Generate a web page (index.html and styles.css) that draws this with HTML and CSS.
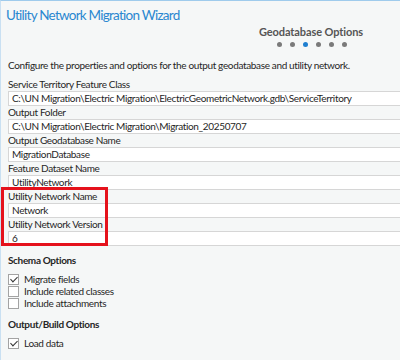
FILE: index.html
```html
<!DOCTYPE html>
<html lang="en">
<head>
  <meta charset="UTF-8">
  <title>Utility Network Migration Wizard</title>
  <link rel="stylesheet" href="styles.css">
</head>
<body>
  <div class="wizard">
    <div class="title">Utility Network Migration Wizard</div>
    <div class="step">
      <div class="step-name">Geodatabase Options</div>
      <div class="dots">
        <span class="dot"></span>
        <span class="dot"></span>
        <span class="dot active"></span>
        <span class="dot"></span>
        <span class="dot"></span>
        <span class="dot"></span>
      </div>
    </div>
    <div class="intro">Configure the properties and options for the output geodatabase and utility network.</div>

    <div class="fields">
      <div class="field">
        <div class="label">Service Territory Feature Class</div>
        <div class="input">C:\UN Migration\Electric Migration\ElectricGeometricNetwork.gdb\ServiceTerritory</div>
      </div>
      <div class="field">
        <div class="label">Output Folder</div>
        <div class="input">C:\UN Migration\Electric Migration\Migration_20250707</div>
      </div>
      <div class="field">
        <div class="label">Output Geodatabase Name</div>
        <div class="input">MigrationDatabase</div>
      </div>
      <div class="field">
        <div class="label">Feature Dataset Name</div>
        <div class="input">UtilityNetwork</div>
      </div>
      <div class="highlight">
        <div class="field">
          <div class="label">Utility Network Name</div>
          <div class="input">Network</div>
        </div>
        <div class="field">
          <div class="label">Utility Network Version</div>
          <div class="input">6</div>
        </div>
        <div class="marker"></div>
      </div>
    </div>

    <div class="section">
      <div class="section-title">Schema Options</div>
      <label class="check"><span class="box checked"></span>Migrate fields</label>
      <label class="check"><span class="box"></span>Include related classes</label>
      <label class="check"><span class="box"></span>Include attachments</label>
    </div>

    <div class="section">
      <div class="section-title">Output/Build Options</div>
      <label class="check"><span class="box checked"></span>Load data</label>
    </div>
  </div>
</body>
</html>
```

FILE: styles.css
```css
* {
  box-sizing: border-box;
  margin: 0;
  padding: 0;
}

body {
  background-color: #f5f7f7;
  font-family: "Lato", "Noto Sans", sans-serif;
  font-size: 10px;
  letter-spacing: -0.35px;
  color: #262626;
  overflow: hidden;
}

.wizard {
  height: 360px;
  border-top: 1px solid #9fcbec;
  border-left: 1px solid #c9e0f2;
  display: flex;
  flex-direction: column;

  & > .title {
    padding: 4px 5px 0;
    font-size: 13.5px;
    letter-spacing: -0.75px;
    line-height: 20px;
    color: #2a87d0;
  }

  & > .step {
    display: flex;
    flex-direction: column;
    align-items: center;
    align-self: flex-end;
    margin-right: 37px;

    & > .step-name {
      font-size: 11px;
      font-weight: 700;
      letter-spacing: -0.1px;
      line-height: 14px;
      color: #555;
    }

    & > .dots {
      display: flex;
      gap: 8px;
      margin-top: 3px;
      margin-left: 3px;

      .dot {
        width: 5px;
        height: 5px;
        border-radius: 999px;
        background-color: #7a7a7a;

        &.active {
          background-color: #1f7fd0;
        }
      }
    }
  }

  & > .intro {
    margin-top: 11px;
    padding-left: 7px;
    line-height: 14px;
    white-space: nowrap;
  }
}

.fields {
  margin-top: 6px;
  padding-left: 7px;

  .field {
    & > .label {
      height: 13px;
      line-height: 13px;
    }

    & > .input {
      height: 15px;
      line-height: 13px;
      padding-left: 3px;
      background-color: #fff;
      border: 1px solid #d6d6d6;
      border-right: none;
      white-space: nowrap;
    }
  }

  & > .highlight {
    position: relative;

    & > .marker {
      position: absolute;
      left: -7px;
      top: -3px;
      width: 107px;
      height: 59px;
      border: 3px solid #e5121c;
    }
  }
}

.section {
  display: flex;
  flex-direction: column;
  padding-left: 7px;
  margin-top: 7px;

  & + .section {
    margin-top: 8px;
  }

  & > .section-title {
    font-weight: 700;
    line-height: 14px;
    margin-bottom: 6px;
  }

  & > .check {
    display: flex;
    align-items: center;
    gap: 5px;
    height: 12px;
    line-height: 12px;

    & > .box {
      width: 11px;
      height: 11px;
      background-color: #fff;
      border: 1px solid #a3a3a3;
      position: relative;

      &.checked::after {
        content: "";
        position: absolute;
        left: 3px;
        top: 0px;
        width: 3px;
        height: 6px;
        border-right: 1.5px solid #333;
        border-bottom: 1.5px solid #333;
        transform: rotate(45deg);
      }
    }
  }
}
```
